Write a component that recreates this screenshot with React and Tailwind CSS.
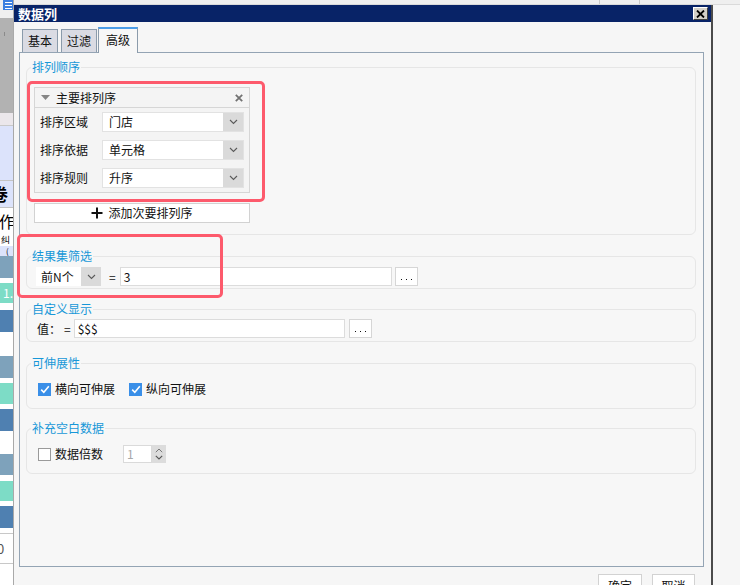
const Chevron = () => (
  <svg width="9" height="6" viewBox="0 0 9 6" className="block">
    <path d="M1 1 L4.5 4.5 L8 1" fill="none" stroke="#5a5a5a" strokeWidth="1.1" />
  </svg>
);

const Select = ({ value, className }) => (
  <div className={`flex border border-[#e2e2e2] bg-white ${className}`}>
    <div className="flex-1 pl-[6px] flex items-center text-[12px] leading-none text-[#111]">{value}</div>
    <div className="w-[20px] bg-[#dadada] flex items-center justify-center">
      <Chevron />
    </div>
  </div>
);

const CheckBox = ({ checked }) =>
  checked ? (
    <div className="w-[13px] h-[13px] bg-[#3a8fe8] flex items-center justify-center shrink-0">
      <svg width="10" height="9" viewBox="0 0 10 9">
        <path d="M1.2 4.6 L3.8 7.2 L8.8 1.2" fill="none" stroke="#fff" strokeWidth="1.6" />
      </svg>
    </div>
  ) : (
    <div className="w-[13px] h-[13px] bg-white border border-[#9a9a9a] shrink-0" />
  );

const DotsBtn = () => (
  <div className="w-[23px] h-[19px] bg-white border border-[#d6d6d6] flex items-end justify-center gap-[4px] pb-[5px]">
    <div className="w-px h-px bg-[#111]" />
    <div className="w-px h-px bg-[#111]" />
    <div className="w-px h-px bg-[#111]" />
  </div>
);

const Group = ({ title, children, className }) => (
  <fieldset className={`rounded-[6px] border border-[#e6e6e6] min-w-0 ${className}`}>
    <legend className="ml-[4px] px-[1px] text-[12px] leading-[14px] text-[#1797d8]">{title}</legend>
    {children}
  </fieldset>
);

const LeftStrip = () => (
  <div className="w-[14px] shrink-0 flex flex-col border-r border-[#a9a9a9] overflow-hidden bg-white text-black">
    <div className="h-[18px] bg-[#efefef] pl-[3px]">
      <div className="w-[11px] h-[10px] bg-[#3b7fe0] flex flex-col justify-center gap-[2px] pl-[2px]">
        <div className="h-px w-[7px] bg-white" />
        <div className="h-px w-[7px] bg-white" />
        <div className="h-px w-[7px] bg-white" />
      </div>
    </div>
    <div className="h-[95px] bg-[#b2b2b2] pt-[14px] pl-[4px]">
      <div className="w-px h-[4px] bg-[#8a8a8a]" />
    </div>
    <div className="h-[13px] bg-[#ebe7eb] border-b border-[#c9c9c9]" />
    <div className="h-[55px] bg-[#dce3fb] border-b border-[#c3c3c3]" />
    <div className="h-[27px] bg-[#dce3fb] border-b border-[#c3c3c3] overflow-hidden">
      <div className="-ml-[9px] text-[17px] leading-[26px] font-bold">卷</div>
    </div>
    <div className="h-[26px] overflow-hidden">
      <div className="-ml-[1px] text-[16px] leading-[26px]">作</div>
    </div>
    <div className="h-[12px] overflow-hidden">
      <div className="ml-[1px] text-[9px] leading-[12px]">纠</div>
    </div>
    <div className="h-[10px] bg-[#dce3fb] overflow-hidden">
      <div className="ml-[6px] text-[8px] leading-[10px]">(</div>
    </div>
    <div className="h-[22px] bg-[#7ea2bb]" />
    <div className="h-[5px]" />
    <div className="h-[20px] bg-[#7ddcc6] text-white text-[12px] leading-[20px] pl-[3px]">1.</div>
    <div className="h-[7px]" />
    <div className="h-[22px] bg-[#4f80b1]" />
    <div className="h-[24px]" />
    <div className="h-[22px] bg-[#7ea2bb]" />
    <div className="h-[5px]" />
    <div className="h-[21px] bg-[#7ddcc6]" />
    <div className="h-[5px]" />
    <div className="h-[22px] bg-[#4f80b1]" />
    <div className="h-[23px]" />
    <div className="h-[21px] bg-[#7ea2bb]" />
    <div className="h-[6px]" />
    <div className="h-[20px] bg-[#7ddcc6]" />
    <div className="h-[5px]" />
    <div className="h-[22px] bg-[#4f80b1]" />
    <div className="h-[6px] border-b border-[#c8c8c8]" />
    <div className="h-[30px] border-b border-[#c8c8c8] overflow-hidden">
      <div className="-ml-[3px] text-[13px] leading-[30px] text-[#555]">0</div>
    </div>
    <div className="flex-1" />
  </div>
);

export default function App() {
  return (
    <div className="relative w-[740px] h-[585px] overflow-hidden flex bg-[#f6f6f6] font-['Noto_Sans_CJK_SC','Liberation_Sans',sans-serif] text-[#111]">
      <LeftStrip />

      <div className="flex-1 flex flex-col min-w-0">
        <div className="h-[5px] shrink-0 bg-[#efefef] border-b border-[#dadada] flex">
          <div className="w-[586px] border-r border-[#c8c8c8]" />
          <div className="w-[40px] border-r border-[#c8c8c8]" />
        </div>

        <div className="flex flex-1 min-h-0">
          {/* dialog */}
          <div className="w-[699px] shrink-0 flex flex-col border-r-2 border-[#4b4b4b] bg-[#f6f6f6]">
            <div className="h-[17px] shrink-0 bg-[#082367] flex items-center justify-between pl-[4px] pr-[3px]">
              <span className="text-white font-bold text-[13px] leading-none">数据列</span>
              <div className="w-[15px] h-[13px] bg-[#d4d0c8] border-t border-l border-t-white border-l-white border-b border-r border-b-[#404040] border-r-[#404040] flex items-center justify-center">
                <svg width="9" height="8" viewBox="0 0 9 8">
                  <path d="M1 0.5 L8 7.5 M8 0.5 L1 7.5" stroke="#000" strokeWidth="1.8" />
                </svg>
              </div>
            </div>

            <div className="flex flex-col pl-[5px] pr-[7px] pt-[5px]">
              {/* tabs */}
              <div className="h-[25px] flex items-start pl-[3px]">
                <div className="mt-[2px] h-[23px] w-[36px] bg-[#dadbe3] border border-[#8b9bab] border-b-0 flex items-center justify-center text-[12px] leading-none">基本</div>
                <div className="mt-[2px] ml-[3px] h-[23px] w-[36px] bg-[#dadbe3] border border-[#8b9bab] border-b-0 flex items-center justify-center text-[12px] leading-none">过滤</div>
                <div className="relative z-10 ml-[1px] h-[26px] w-[40px] bg-[#f7f7f7] border-x border-[#8b9bab] border-t-2 border-t-[#4c9ee8] flex items-center justify-center text-[12px] leading-none pb-[2px]">高级</div>
              </div>

              {/* panel */}
              <div className="h-[515px] border border-[#94a4b4] bg-[#f7f7f7] pt-[7px] pl-[6px] pr-[7px] flex flex-col">
                <Group title="排列顺序">
                  <div className="pt-[13px] pl-[7px] pb-[11px]">
                    <div className="w-[216px] border border-[#d6d6d6] bg-[#f4f4f4]">
                      <div className="h-[20px] border-b border-[#d6d6d6] flex items-center pl-[6px] pr-[6px]">
                        <svg width="9" height="5" viewBox="0 0 9 5" className="shrink-0">
                          <path d="M0 0 L9 0 L4.5 5 Z" fill="#858585" />
                        </svg>
                        <span className="ml-[6px] text-[12px] leading-none">主要排列序</span>
                        <svg width="8" height="8" viewBox="0 0 8 8" className="ml-auto">
                          <path d="M0.8 0.8 L7.2 7.2 M7.2 0.8 L0.8 7.2" stroke="#727272" strokeWidth="1.8" />
                        </svg>
                      </div>
                      <div className="flex flex-col gap-[8px] pt-[4px] pb-[4px] pl-[5px]">
                        {[
                          ['排序区域', '门店'],
                          ['排序依据', '单元格'],
                          ['排序规则', '升序'],
                        ].map(([k, v]) => (
                          <div key={k} className="flex items-center h-[20px]">
                            <span className="w-[62px] text-[12px] leading-none">{k}</span>
                            <Select value={v} className="w-[142px] h-[20px]" />
                          </div>
                        ))}
                      </div>
                    </div>
                    <div className="mt-[10px] w-[216px] h-[20px] bg-white border border-[#d2d2d2] flex items-center justify-center gap-[5px]">
                      <svg width="12" height="12" viewBox="0 0 12 12">
                        <path d="M6 0.5 V11.5 M0.5 6 H11.5" stroke="#111" strokeWidth="2" />
                      </svg>
                      <span className="text-[12px] leading-none">添加次要排列序</span>
                    </div>
                  </div>
                </Group>

                <Group title="结果集筛选" className="mt-[14px]">
                  <div className="pt-[4px] pb-[2px] pl-[9px] flex items-center">
                    <div className="flex w-[65px] h-[19px] bg-white">
                      <div className="flex-1 pl-[5px] flex items-center text-[12px] leading-none">前N个</div>
                      <div className="w-[20px] bg-[#dadada] flex items-center justify-center">
                        <Chevron />
                      </div>
                    </div>
                    <span className="ml-[8px] text-[12px] leading-none">=</span>
                    <div className="ml-[4px] w-[272px] h-[19px] bg-white border border-[#dcdcdc] flex items-center pl-[3px] text-[12px] leading-none">3</div>
                    <div className="ml-[3px]">
                      <DotsBtn />
                    </div>
                  </div>
                </Group>

                <Group title="自定义显示" className="mt-[13px]">
                  <div className="pt-[3px] pb-[3px] pl-[10px] flex items-center">
                    <span className="text-[12px] leading-none">值：</span>
                    <span className="ml-[3px] text-[12px] leading-none">=</span>
                    <div className="ml-[3px] w-[271px] h-[19px] bg-white border border-[#dcdcdc] flex items-center pl-[3px] text-[12px] leading-none">$$$</div>
                    <div className="ml-[4px]">
                      <DotsBtn />
                    </div>
                  </div>
                </Group>

                <Group title="可伸展性" className="mt-[14px]">
                  <div className="pt-[10px] pb-[10px] pl-[11px] h-[38px] flex items-center">
                    <CheckBox checked />
                    <span className="ml-[4px] text-[12px] leading-none">横向可伸展</span>
                    <div className="ml-[14px]">
                      <CheckBox checked />
                    </div>
                    <span className="ml-[4px] text-[12px] leading-none">纵向可伸展</span>
                  </div>
                </Group>

                <Group title="补充空白数据" className="mt-[12px]">
                  <div className="pt-[10px] pb-[10px] pl-[11px] h-[38px] flex items-center">
                    <CheckBox />
                    <span className="ml-[4px] text-[12px] leading-none">数据倍数</span>
                    <div className="ml-[20px] flex w-[43px] h-[18px]">
                      <div className="flex-1 bg-white border border-[#dadada] flex items-center pl-[3px] text-[12px] leading-none text-[#a8a8a8]">1</div>
                      <div className="w-[14px] bg-[#dcdcdc] flex flex-col items-center justify-center gap-[2px]">
                        <svg width="8" height="5" viewBox="0 0 8 5">
                          <path d="M0.8 4.2 L4 1 L7.2 4.2" fill="none" stroke="#777" strokeWidth="1" />
                        </svg>
                        <svg width="8" height="5" viewBox="0 0 8 5">
                          <path d="M0.8 0.8 L4 4 L7.2 0.8" fill="none" stroke="#555" strokeWidth="1.1" />
                        </svg>
                      </div>
                    </div>
                  </div>
                </Group>
              </div>

              {/* footer buttons */}
              <div className="mt-[7px] flex justify-end gap-[10px] pr-[9px]">
                <div className="w-[44px] h-[23px] bg-white border border-[#d2d2d2] flex items-center justify-center text-[12px] leading-none">确定</div>
                <div className="w-[43px] h-[23px] bg-white border border-[#d2d2d2] flex items-center justify-center text-[12px] leading-none">取消</div>
              </div>
            </div>
          </div>

          <div className="flex-1 bg-[#f6f6f6]" />
        </div>
      </div>

      {/* red annotation boxes */}
      <div className="absolute left-[27px] top-[81px] w-[238px] h-[121px] border-[3px] border-[#fd5a6c] rounded-[5px] pointer-events-none" />
      <div className="absolute left-[17px] top-[234px] w-[206px] h-[64px] border-[3px] border-[#fd5a6c] rounded-[5px] pointer-events-none" />
    </div>
  );
}
